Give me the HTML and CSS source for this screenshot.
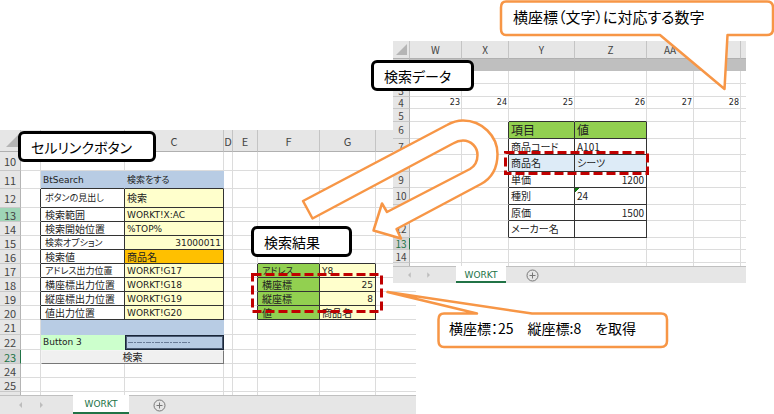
FILE: index.html
```html
<!DOCTYPE html>
<html lang="ja">
<head>
<meta charset="utf-8">
<title>WORKT</title>
<link rel="stylesheet" href="styles.css">
</head>
<body>
<main class="canvas">

<section class="book book-left">
<div class="grid">
<table class="sheet">
<colgroup><col class="w21"><col class="w20"><col class="w84"><col class="w99"><col class="w9"><col class="w25"><col class="w62"><col class="w56"><col class="w40"></colgroup>
<tr class="h22 cols"><th class="corner"><svg width="12" height="12" viewBox="0 0 12 12"><path d="M12 0V12H0Z"/></svg></th><th></th><th></th><th>C</th><th>D</th><th>E</th><th>F</th><th>G</th><th></th></tr>
<tr class="h19"><th>10</th><td></td><td></td><td></td><td></td><td></td><td></td><td></td><td></td></tr>
<tr class="h18"><th>11</th><td></td><td class="blue under latin">BtSearch</td><td class="blue under kana">検索をする</td><td></td><td></td><td></td><td></td><td></td></tr>
<tr class="h19"><th>12</th><td class="edge"></td><td class="box label kana">ボタンの見出し</td><td class="box yellow">検索</td><td></td><td></td><td></td><td></td><td></td></tr>
<tr><th class="picked">13</th><td class="edge"></td><td class="box label">検索範囲</td><td class="box yellow latin">WORKT!X:AC</td><td></td><td></td><td></td><td></td><td></td></tr>
<tr><th>14</th><td class="edge"></td><td class="box label">検索開始位置</td><td class="box yellow latin">%TOP%</td><td></td><td></td><td></td><td></td><td></td></tr>
<tr><th>15</th><td class="edge"></td><td class="box label kana">検索オプション</td><td class="box yellow latin num">31000011</td><td></td><td></td><td></td><td></td><td></td></tr>
<tr><th>16</th><td class="edge"></td><td class="box label">検索値</td><td class="box orange">商品名</td><td></td><td></td><td class="under"></td><td class="under"></td><td></td></tr>
<tr><th>17</th><td class="edge"></td><td class="box label kana">アドレス出力位置</td><td class="box yellow latin">WORKT!G17</td><td></td><td class="edge"></td><td class="box green label kana">アドレス</td><td class="box yellow latin">Y8</td><td></td></tr>
<tr><th>18</th><td class="edge"></td><td class="box label">横座標出力位置</td><td class="box yellow latin">WORKT!G18</td><td></td><td class="edge"></td><td class="box green label">横座標</td><td class="box yellow latin num">25</td><td></td></tr>
<tr><th>19</th><td class="edge"></td><td class="box label">縦座標出力位置</td><td class="box yellow latin">WORKT!G19</td><td></td><td class="edge"></td><td class="box green label">縦座標</td><td class="box yellow latin num">8</td><td></td></tr>
<tr><th>20</th><td class="edge"></td><td class="box label">値出力位置</td><td class="box yellow latin">WORKT!G20</td><td></td><td class="edge"></td><td class="box green label">値</td><td class="box yellow">商品名</td><td></td></tr>
<tr class="h15"><th>21</th><td></td><td class="blue"></td><td class="blue"></td><td></td><td></td><td></td><td></td><td></td></tr>
<tr class="h15"><th>22</th><td></td><td class="mint latin">Button 3</td><td class="cursor"><svg width="62" height="1" viewBox="0 0 62 1"><path d="M0 .5H62"/></svg></td><td></td><td></td><td></td><td></td><td></td></tr>
<tr><th class="current">23</th><td></td><td class="push" colspan="2"><button type="button">検索</button></td><td></td><td></td><td></td><td></td><td></td></tr>
<tr><th>24</th><td></td><td></td><td></td><td></td><td></td><td></td><td></td><td></td></tr>
<tr><th>25</th><td></td><td></td><td></td><td></td><td></td><td></td><td></td><td></td></tr>
<tr><th>26</th><td></td><td></td><td></td><td></td><td></td><td></td><td></td><td></td></tr>
</table>
</div>
<nav class="tabs">
<svg class="nav" width="24" height="6" viewBox="0 0 24 6"><path d="M3 0V6L0 3ZM21 0V6L24 3Z"/></svg>
<a class="tab" href="#worksheet">WORKT</a>
<button class="add" type="button" aria-label="Add"><svg width="13" height="13" viewBox="0 0 13 13"><circle cx="6.5" cy="6.5" r="5.5"/><path d="M6.5 3.5V9.5M3.5 6.5H9.5"/></svg></button>
</nav>
</section>

<section class="book book-right">
<div class="grid">
<table class="sheet">
<colgroup><col class="w17"><col class="w52"><col class="w47"><col class="w66"><col class="w72"><col class="w47"><col class="w47"><col class="w5"></colgroup>
<tr class="h18 cols"><th class="corner"><svg width="11" height="11" viewBox="0 0 12 12"><path d="M12 0V12H0Z"/></svg></th><th>W</th><th>X</th><th>Y</th><th>Z</th><th>AA</th><th></th><th></th></tr>
<tr class="h12 band"><th>1</th><td></td><td></td><td></td><td></td><td></td><td></td><td></td></tr>
<tr class="h13"><th>2</th><td></td><td></td><td></td><td></td><td></td><td></td><td></td></tr>
<tr class="h13"><th>3</th><td></td><td></td><td></td><td></td><td></td><td></td><td></td></tr>
<tr class="h12 index"><th>4</th><td>23</td><td>24</td><td>25</td><td>26</td><td>27</td><td>28</td><td></td></tr>
<tr class="h13"><th>5</th><td></td><td></td><td class="under"></td><td class="under"></td><td></td><td></td><td></td></tr>
<tr class="h17"><th>6</th><td></td><td class="edge"></td><td class="box green title">項目</td><td class="box green title">値</td><td></td><td></td><td></td></tr>
<tr class="h16"><th>7</th><td></td><td class="edge"></td><td class="box">商品コード</td><td class="box">A101</td><td></td><td></td><td></td></tr>
<tr class="h17"><th>8</th><td></td><td class="edge"></td><td class="box pale">商品名</td><td class="box pale">シーツ</td><td></td><td></td><td></td></tr>
<tr class="h16"><th>9</th><td></td><td class="edge"></td><td class="box">単価</td><td class="box num">1200</td><td></td><td></td><td></td></tr>
<tr class="h17"><th>10</th><td></td><td class="edge"></td><td class="box">種別</td><td class="box flag">24</td><td></td><td></td><td></td></tr>
<tr class="h16"><th>11</th><td></td><td class="edge"></td><td class="box">原価</td><td class="box num">1500</td><td></td><td></td><td></td></tr>
<tr class="h17"><th>12</th><td></td><td class="edge"></td><td class="box">メーカー名</td><td class="box"></td><td></td><td></td><td></td></tr>
<tr class="h12"><th class="current">13</th><td></td><td></td><td></td><td></td><td></td><td></td><td></td></tr>
<tr class="h13"><th>14</th><td></td><td></td><td></td><td></td><td></td><td></td><td></td></tr>
<tr><th>15</th><td></td><td></td><td></td><td></td><td></td><td></td><td></td></tr>
</table>
</div>
<nav class="tabs">
<svg class="nav" width="22" height="6" viewBox="0 0 24 6"><path d="M3 0V6L0 3ZM21 0V6L24 3Z"/></svg>
<a class="tab" href="#worksheet">WORKT</a>
<button class="add" type="button" aria-label="Add"><svg width="13" height="13" viewBox="0 0 13 13"><circle cx="6.5" cy="6.5" r="5.5"/><path d="M6.5 3.5V9.5M3.5 6.5H9.5"/></svg></button>
</nav>
</section>

<svg class="marks" width="774" height="414" viewBox="0 0 774 414">
<g class="callout">
<path d="M303 201L447 125Q455 120.500 463 120.500C482 120.500 497.500 136 497.500 154Q497.500 175 481 184L396.500 229L401 238.500L373.500 230.500L382 203.500L387 212L470 169Q477.500 164.500 477.500 155C477.500 147 471 140.500 463 140.500Q458 140.500 453 143.500L312.500 218.500Z"/>
<path d="M506 1.500H767Q773 1.500 773 7.500V29Q773 35 767 35H727.500L724.500 89L660 35H506Q501 35 501 29V7.500Q501 1.500 506 1.500Z"/>
<path d="M444 313.500H477L387.500 292L532 313.500H661Q667 313.500 667 319.500V341Q667 347 661 347H444Q438.500 347 438.500 341V319.500Q438.500 313.500 444 313.500Z"/>
</g>
<g class="dashes">
<rect x="252.500" y="274.500" width="129" height="37"/>
<rect x="505.500" y="152.500" width="142" height="21"/>
</g>
</svg>

<p class="note note-link">セルリンクボタン</p>
<p class="note note-data">検索データ</p>
<p class="note note-result">検索結果</p>
<p class="say say-top">横座標（文字）に対応する数字</p>
<p class="say say-bottom">横座標：25　縦座標:8　を取得</p>
</main>
</body>
</html>
```
FILE: styles.css
```css
* { box-sizing: border-box; }

body {
  margin: 0;
  background: #fff;
  color: #222;
  font-family: "Noto Sans CJK JP", sans-serif;
}

.canvas {
  position: relative;
  min-height: 100vh;
  overflow: hidden;
}

/* Workbook windows */
.book { position: absolute; background: #fff; }
.book-left { left: 0; top: 130px; }
.book-right { left: 393px; top: 41px; }
.grid { overflow: hidden; }
.book-left .grid { height: 265px; }
.book-right .grid { height: 225px; }

.sheet {
  table-layout: fixed;
  border-collapse: separate;
  border-spacing: 0;
  font-size: 10px;
  line-height: 12px;
}
.book-left .sheet { width: 416px; }
.book-right .sheet { width: 353px; }

.w5 { width: 5px; }
.w9 { width: 9px; }
.w17 { width: 17px; }
.w20 { width: 20px; }
.w21 { width: 21px; }
.w25 { width: 25px; }
.w40 { width: 40px; }
.w47 { width: 47px; }
.w52 { width: 52px; }
.w56 { width: 56px; }
.w62 { width: 62px; }
.w66 { width: 66px; }
.w72 { width: 72px; }
.w84 { width: 84px; }
.w99 { width: 99px; }

.sheet tr { height: 14px; }
.sheet .h12 { height: 12px; }
.sheet .h13 { height: 13px; }
.sheet .h15 { height: 15px; }
.sheet .h16 { height: 16px; }
.sheet .h17 { height: 17px; }
.sheet .h18 { height: 18px; }
.sheet .h19 { height: 19px; }
.sheet .h22 { height: 22px; }
.sheet .h12, .sheet .h13 { line-height: 11px; }

.sheet td {
  padding: 0 2px;
  border-right: 1px solid #dcdcdc;
  border-bottom: 1px solid #dcdcdc;
  white-space: nowrap;
  font-feature-settings: "palt";
}
.sheet td:last-child { border-right: 0; }

.sheet th {
  padding: 0;
  background: #e6e6e6;
  border-right: 1px solid #b4b4b4;
  border-bottom: 1px solid #c8c8c8;
  color: #444;
  font-size: 11px;
  font-weight: 400;
  text-align: center;
}
.book-right .sheet th { font-size: 10px; }
.sheet .cols th { border-right-color: #c4c4c4; border-bottom-color: #b0b0b0; }
.sheet .cols th:last-child { border-right: 0; }
.corner svg { display: block; margin: 0 2px 0 auto; fill: #b5b5b5; }
.sheet .picked { background: #9fd5b7; }
.sheet .current {
  background: #d4d4d4;
  border-right: 1px solid #217346;
  color: #217346;
}

.sheet .latin { font-family: "DejaVu Sans", "Noto Sans CJK JP", sans-serif; font-size: 9px; }
.sheet .kana { font-size: 9px; }
.sheet .label { padding-left: 4px; }
.sheet .num { text-align: right; }
.sheet .edge { border-right-color: #333; }
.sheet .under { border-bottom-color: #333; }
.sheet .box { border-right-color: #333; border-bottom-color: #333; }
.yellow { background: #ffffcc; }
.orange { background: #ffc000; }
.green { background: #92d050; }
.mint { background: #ccffcc; }
.pale { background: #ddebf7; }
.sheet .blue { background: #b8cce4; border-right-color: #b8cce4; }
.sheet .blue:not(.under) { border-bottom-color: #b8cce4; }
.sheet .mint { border-color: #ccffcc; }
.sheet .title { font-size: 12px; line-height: 16px; }
.sheet .band td { background: #bfbfbf; border-color: #bfbfbf; }
.sheet .band th { background: #d4d4d4; }
.sheet .index td {
  padding: 0 1px;
  font-family: "DejaVu Sans", sans-serif;
  font-size: 8px;
  text-align: right;
}
.flag { background: linear-gradient(135deg, #107c10 3px, transparent 3px); }

.sheet .cursor {
  border: 1px solid #1a2638;
  background: #b8cce4;
  box-shadow: inset 0 0 0 1px #4a5a72;
}
.cursor svg { display: block; fill: none; stroke: #6a7c98; stroke-width: 1; stroke-dasharray: 5 1 2 1; }

.sheet .push { padding: 0; border: 0; }
.push button {
  display: block;
  width: 100%;
  height: 14px;
  padding: 0;
  border: 1px solid #f4f4f4;
  border-right-color: #777;
  border-bottom-color: #777;
  background: #f0f0f0;
  color: #222;
  font: 10px/12px "Noto Sans CJK JP", sans-serif;
}

/* Sheet tabs */
.tabs {
  display: flex;
  align-items: center;
  height: 19px;
  border-top: 1px solid #c0c0c0;
  background: #e6e6e6;
}
.book-left .tabs { padding-left: 19px; }
.book-right .tabs { height: 17px; padding-left: 15px; }
.nav { fill: #bdbdbd; }
.tab {
  display: block;
  align-self: stretch;
  width: 56px;
  margin: -1px 24px 0 30px;
  border-bottom: 2px solid #217346;
  background: #fff;
  color: #217346;
  font: 9px/18px "DejaVu Sans", sans-serif;
  text-align: center;
  text-decoration: none;
}
.book-right .tab { width: 50px; margin: -1px 20px 0 26px; }
.add { display: block; padding: 0; border: 0; background: none; }
.add svg { display: block; fill: none; stroke: #777; stroke-width: 1; }

/* Annotations drawn over the windows */
.marks { position: absolute; left: 0; top: 0; }
.callout { fill: #fff; stroke: #f79646; stroke-width: 2.500; stroke-linejoin: round; }
.dashes { fill: none; stroke: #c00000; stroke-width: 3; stroke-dasharray: 9 4; }

.note, .say {
  position: absolute;
  margin: 0;
  color: #000;
  font-size: 14px;
  white-space: nowrap;
  font-feature-settings: "palt";
}
.note {
  height: 31px;
  border: 3px solid #000;
  border-radius: 6px;
  background: #fff;
  line-height: 26px;
  padding: 0 10px;
}
.note-link { left: 18px; top: 131px; width: 138px; }
.note-data { left: 371px; top: 60px; width: 103px; }
.note-result { left: 251px; top: 226px; width: 101px; }
.say { line-height: 20px; }
.say-top { left: 513px; top: 7px; font-size: 15px; }
.say-bottom { left: 449px; top: 318px; }
```
